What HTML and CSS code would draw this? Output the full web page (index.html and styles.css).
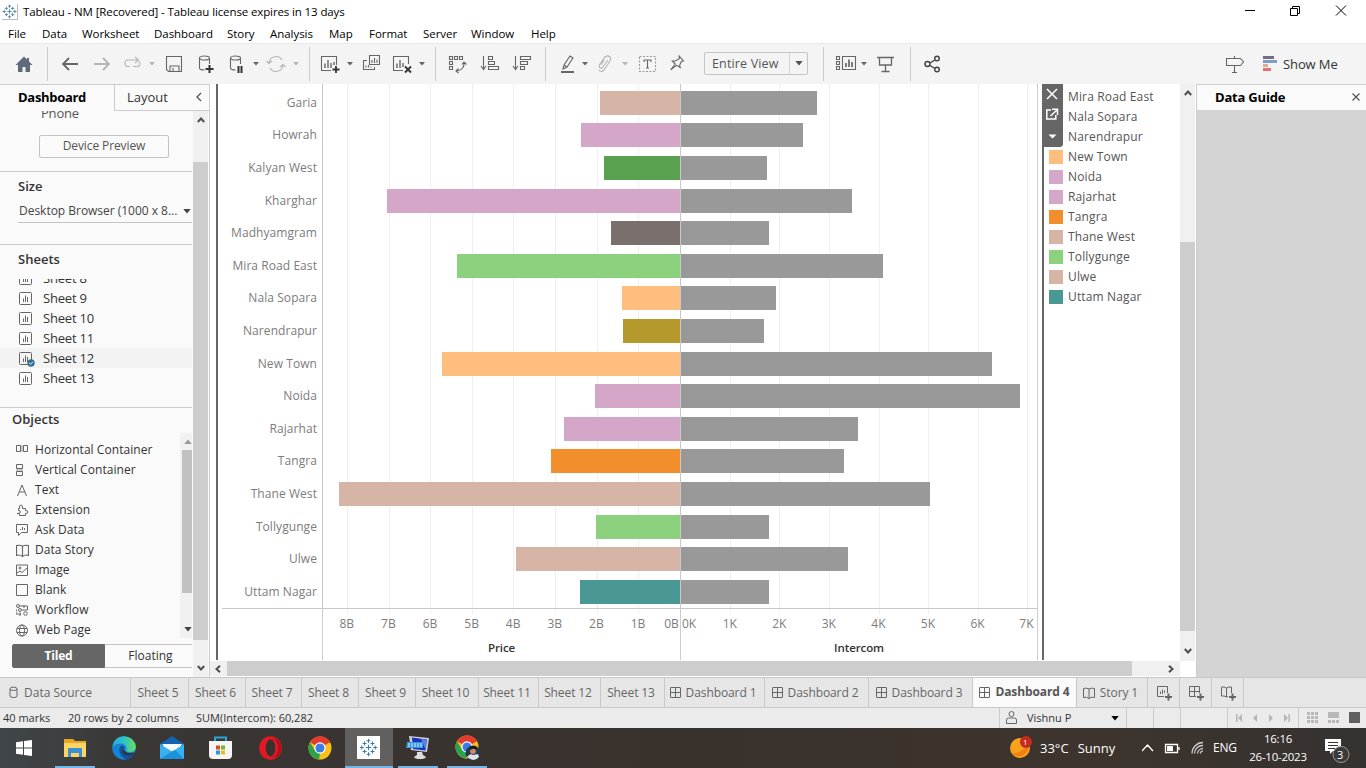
FILE: index.html
```html
<!DOCTYPE html>
<html lang="en">
<head>
<meta charset="utf-8">
<title>Tableau - NM</title>
<link rel="stylesheet" href="styles.css">
</head>
<body>
<svg class="defs" width="0" height="0">
  <symbol id="caret" viewBox="0 0 6 4"><path d="M0 0h6L3 3.6z" fill="currentColor"/></symbol>
  <symbol id="sheet" viewBox="0 0 13 13"><rect x=".5" y=".5" width="12" height="12" rx="1"/><path d="M4.500 10V6.500M6.500 10V3.500M8.500 10V5"/></symbol>
  <symbol id="dash" viewBox="0 0 11 11"><rect x=".5" y=".5" width="10" height="10" rx=".5"/><path d="M5.500 0v11M0 5.500h11"/></symbol>
  <symbol id="book" viewBox="0 0 12 12"><path d="M.5 1.500Q3.500.5 6 2Q8.500.5 11.500 1.500V10.500Q8.500 9.500 6 11.500Q3.500 9.500.5 10.500zM6 2V11.500"/></symbol>
  <symbol id="up" viewBox="0 0 8 6"><path d="M.8 5L4 1.500 7.200 5" fill="none" stroke="#4f4f4f" stroke-width="2"/></symbol>
  <symbol id="chrome" viewBox="0 0 24 24"><circle cx="12" cy="12" r="11.500" fill="#fbc116"/><path d="M12 12L2 6.300A11.500 11.500 0 0 1 22 6.300z" fill="#e33b2e"/><path d="M12 .5A11.500 11.500 0 0 1 22 6.300H12z" fill="#e33b2e"/><path d="M2 6.300L7.300 15 12 17.500 11 23.500A11.500 11.500 0 0 1 2 6.300z" fill="#2ba24c"/><circle cx="12" cy="12" r="5.700" fill="#fff"/><circle cx="12" cy="12" r="4.500" fill="#397de8"/></symbol>
  <symbol id="mark" viewBox="0 0 24 24"><path d="M12 1v5M9.500 3.500h5M12 18v5M9.500 20.500h5M1 12h5M3.500 9.500v5M18 12h5M20.500 9.500v5M7 4.500v5M4.500 7h5M17 4.500v5M14.500 7h5M7 14.500v5M4.500 17h5M17 14.500v5M14.500 17h5M12 8.500v7M8.500 12h7" stroke="#3b7d9c" stroke-width="1.300" fill="none"/></symbol>
</svg>

<header class="titlebar">
  <svg class="app-icon" width="16" height="16" viewBox="0 0 24 24"><use href="#mark"/></svg>
  <span class="title">Tableau - NM [Recovered] - Tableau license expires in 13 days</span>
  <svg class="win-controls" width="102" height="12" viewBox="0 0 102 12" fill="none" stroke="#000"><path d="M0 5.500h10M45.500 3.500h7v7h-7zM47.500 3.500v-2h7v7h-2M91 .5l10 10M101 .5l-10 10"/></svg>
</header>
<nav class="menubar">
  <span>File</span><span>Data</span><span>Worksheet</span><span>Dashboard</span><span>Story</span><span>Analysis</span><span>Map</span><span>Format</span><span>Server</span><span>Window</span><span>Help</span>
</nav>

<div class="toolbar">
  <svg class="i" viewBox="0 0 20 20"><path d="M10 2.500L1.500 11H4v7h4.500v-5h3v5H16v-7h2.500L15 7.500V4h-2v1.500z" fill="#5f6b7a" stroke="none"/></svg>
  <i class="sep"></i>
  <svg class="i heavy" viewBox="0 0 20 20"><path d="M18 10H3M9 4L3 10l6 6"/></svg>
  <svg class="i heavy off" viewBox="0 0 20 20"><path d="M2 10h15M11 4l6 6-6 6"/></svg>
  <svg class="i off" viewBox="0 0 20 20"><path d="M8 12.500H5a3.500 3.500 0 0 1 0-6.500h11M13 3l3.500 3L13 9M17 7.500a3 3 0 0 1-1 5h-5"/></svg>
  <svg class="c off"><use href="#caret"/></svg>
  <svg class="i" viewBox="0 0 20 20"><path d="M2.500 2.500h15v15h-13l-2-2zM6 17v-5h9v5M9 17v-3"/></svg>
  <svg class="i" viewBox="0 0 20 20"><ellipse cx="7.500" cy="4" rx="5" ry="2"/><path d="M2.500 4v10q0 2 5 2M12.500 4v6"/><path d="M12.500 11v8M8.500 15h8" stroke="#333" stroke-width="2"/></svg>
  <svg class="i" viewBox="0 0 20 20"><ellipse cx="6.500" cy="4" rx="5" ry="2"/><path d="M1.500 4v10q0 2 5 2M11.500 4v6"/><path d="M9.500 12v7M12.500 12v7" stroke="#333" stroke-width="2"/></svg>
  <svg class="c"><use href="#caret"/></svg>
  <svg class="i off" viewBox="0 0 20 20"><path d="M3 9a7 7 0 0 1 13-3M17 11a7 7 0 0 1-13 3M.5 7L3 9.500 6 7M14 13l3-2.500 2.500 2.500"/></svg>
  <svg class="c off"><use href="#caret"/></svg>
  <i class="sep"></i>
  <svg class="i" viewBox="0 0 20 20"><path d="M11 16.500H1.500v-14h15V11"/><path d="M5 14V9.500M8 14V6M11 14V9M14 11V8" stroke-width="1.400"/><path d="M16 12v7M12.500 15.500h7" stroke="#333" stroke-width="1.800"/></svg>
  <svg class="c"><use href="#caret"/></svg>
  <svg class="i" viewBox="0 0 20 20"><path d="M7.500 1.500h10v9h-10zM5 6.500H1.500v9h11V13M10 9V6M12.500 9V4M15 9V5.500M4 13.500v-2M6.500 13.500V11M9 13.500v-1"/></svg>
  <svg class="i" viewBox="0 0 20 20"><path d="M11 16.500H1.500v-14h15V10"/><path d="M5 14V9.500M8 14V6M11 13V9" stroke-width="1.400"/><path d="M13 12.500l6 6M19 12.500l-6 6" stroke="#333" stroke-width="1.800"/></svg>
  <svg class="c"><use href="#caret"/></svg>
  <i class="sep"></i>
  <svg class="i" viewBox="0 0 20 20"><path d="M1.500 2.500h3v3h-3zM6.500 2.500h3v3h-3zM11.500 2.500h3v3h-3zM1.500 7.500h3v3h-3zM1.500 12.500h3v3h-3zM16 8q1 8-8 9M14 10.500L16 8l2.500 2.500M10.500 14.500L8 17l2.500 2"/></svg>
  <svg class="i" viewBox="0 0 20 20"><path d="M3.500 2v13M1 12l2.500 3.500L6 12M8.500 2.500h4v3h-4zM8.500 7.500h6v3h-6zM8.500 12.500h10v3h-10z"/></svg>
  <svg class="i" viewBox="0 0 20 20"><path d="M3.500 2v13M1 12l2.500 3.500L6 12M8.500 2.500h10v3h-10zM8.500 7.500h7v3h-7zM8.500 12.500h4v3h-4z"/></svg>
  <i class="sep"></i>
  <svg class="i" viewBox="0 0 20 20"><path d="M4 15l1-4 6-9 3 2-6 9zM5 11l3 2"/><path d="M2 18h13" stroke-width="2"/></svg>
  <svg class="c"><use href="#caret"/></svg>
  <svg class="i off" viewBox="0 0 20 20"><path d="M12 6l-5 7q-2 2-3.300.7T4 10l5-7q2.500-2 4.500-.5T14 7l-6 9q-3 3-5 0M8 6l-3 5"/></svg>
  <svg class="c off"><use href="#caret"/></svg>
  <svg class="i" viewBox="0 0 20 20"><rect x="1.500" y="2.500" width="16" height="15" stroke-dasharray="2 1.500" stroke="#999"/><path d="M6 8V6h7v2M9.500 6v8M8 14h3"/></svg>
  <svg class="i" viewBox="0 0 20 20"><path d="M9 2l5 4-2 1-1 4 1 2-4-1.500L3 17l3.500-6.500L3 8l3-.5 3.500-3z" transform="rotate(10 9 9)"/></svg>
  <div class="fit"><span>Entire View</span><svg width="8" height="5" viewBox="0 0 6 4"><use href="#caret"/></svg></div>
  <i class="sep"></i>
  <svg class="i wide" viewBox="0 0 22 20"><path d="M1.500 2.500h3v3h-3zM1.500 7.500h3v3h-3zM1.500 12.500h3v3h-3zM7.500 2.500h13v13h-13z"/><path d="M11 13V9M14 13V5.500M17 13V8" stroke-width="1.700"/></svg>
  <svg class="c"><use href="#caret"/></svg>
  <svg class="i" viewBox="0 0 20 20"><path d="M0 3.500h17M2.500 3v8h12V3M8.500 11v6M4.500 17.500h8" stroke-width="1.300"/></svg>
  <i class="sep"></i>
  <svg class="i share" viewBox="0 0 20 20"><path d="M7 9l5-3M7 11.500l5 3" /><circle cx="4.500" cy="10" r="2.500"/><circle cx="14" cy="4.500" r="2.300"/><circle cx="14" cy="15.500" r="2.300"/></svg>
  <svg class="i" viewBox="0 0 20 20"><path d="M1.500 4.500h14l3 3.500-3 3.500h-14zM9.500 2v2M9.500 11.500V18M7 18.500h5"/></svg>
  <div class="showme"><svg width="15" height="16"><path d="M0 0h11v3H0z" fill="#7b6888"/><path d="M0 4h14v3H0z" fill="#7ba0c4"/><path d="M0 8h5v3H0z" fill="#e8a98c"/><path d="M0 12h8v3H0z" fill="#e4707d"/></svg>Show Me</div>
</div>

<main class="work">
  <aside class="side">
    <div class="side-tabs"><b>Dashboard</b><div class="layout-tab">Layout<svg width="6" height="10" viewBox="0 0 6 10" fill="none" stroke="#555" stroke-width="1.300"><path d="M5 1L1 5l4 4"/></svg></div></div>
    <div class="side-body">
      <div class="side-content">
        <section class="device"><div class="phone">Phone</div><div class="preview">Device Preview</div></section>
        <section class="size"><h3>Size</h3><div class="size-pick">Desktop Browser (1000 x 8...<svg width="8" height="5" viewBox="0 0 6 4"><use href="#caret"/></svg></div></section>
        <section class="sheets"><h3>Sheets</h3>
          <ul>
            <li><svg class="ln"><use href="#sheet"/></svg>Sheet 8</li>
            <li><svg class="ln"><use href="#sheet"/></svg>Sheet 9</li>
            <li><svg class="ln"><use href="#sheet"/></svg>Sheet 10</li>
            <li><svg class="ln"><use href="#sheet"/></svg>Sheet 11</li>
            <li class="hover"><svg class="ln"><use href="#sheet"/></svg>Sheet 12<svg class="check" viewBox="0 0 8 8"><circle cx="4" cy="4" r="3.700" fill="#31708f"/><path d="M2.200 4l1.300 1.300 2.400-2.500" stroke="#fff" fill="none"/></svg></li>
            <li><svg class="ln"><use href="#sheet"/></svg>Sheet 13</li>
          </ul>
        </section>
        <section class="objects"><h3>Objects</h3>
          <div class="obj-wrap">
          <ul>
            <li><svg class="ln" viewBox="0 0 13 13"><path d="M4.500 2h3v5h-3z" fill="#ccc" stroke="#aaa"/><path d="M.5 1.500h4v6h-4zM7.500 1.500h4v6h-4z"/></svg>Horizontal Container</li>
            <li><svg class="ln" viewBox="0 0 13 13"><path d="M1 4.500h5v3H1z" fill="#ccc" stroke="#aaa"/><path d="M.5.5h6v4h-6zM.5 7.500h6v4h-6z"/></svg>Vertical Container</li>
            <li><svg class="ln" viewBox="0 0 13 13"><path d="M1.500 12L6 1l4.500 11M3.500 8h5.500"/></svg>Text</li>
            <li><svg class="ln" viewBox="0 0 13 13"><path d="M3.500 11.500H9.500V9.500Q12 9.500 12 8T9.500 6.500V4.500H6.500Q7 1 5 1T3.500 4.500H2.500V6.500Q4.500 6.500 4.500 8T1 9.500L3.500 9.500z"/></svg>Extension</li>
            <li><svg class="ln" viewBox="0 0 13 13"><path d="M.5.5h11v8h-6l-3 3v-3h-2zM4.500 6V5M6.500 6V3M8.500 6V4"/></svg>Ask Data</li>
            <li><svg class="ln" viewBox="0 0 12 12"><use href="#book"/></svg>Data Story</li>
            <li><svg class="ln" viewBox="0 0 13 13"><path d="M.5 1h11v10.500H.5zM1 9l3-2 2 1.500L11 4"/><circle cx="4" cy="4" r="1"/></svg>Image</li>
            <li><svg class="ln" viewBox="0 0 13 13"><path d="M.5.5h11v11H.5z"/></svg>Blank</li>
            <li><svg class="ln" viewBox="0 0 13 13"><circle cx="2" cy="2" r="1.500"/><circle cx="4" cy="6" r="1.500"/><circle cx="9.500" cy="9.500" r="1.800"/><path d="M3.500 2h8v4H6M1 6H0v4h5M3.500 8.500L5 10l-1.500 2M8 1v3"/></svg>Workflow</li>
            <li><svg class="ln" viewBox="0 0 13 13"><circle cx="6" cy="6.500" r="5.500"/><ellipse cx="6" cy="6.500" rx="2.500" ry="5.500"/><path d="M1 4.500h10M1 8.500h10"/></svg>Web Page</li>
          </ul>
          <div class="obj-scroll"><svg viewBox="0 0 6 4"><path d="M0 4h6L3 .4z" fill="#999"/></svg><i></i><svg viewBox="0 0 6 4" color="#444"><use href="#caret"/></svg></div>
          </div>
          <div class="mode"><b>Tiled</b><span>Floating</span></div>
        </section>
      </div>
      <div class="vscroll side-scroll"><svg class="arr"><use href="#up"/></svg><i></i><svg class="arr dn"><use href="#up"/></svg></div>
    </div>
  </aside>

  <section class="canvas">
    <div class="view">
      <div class="sheetview">
        <div class="plot">
          <svg class="grid" width="819" height="529" stroke="#efefef" shape-rendering="crispEdges"><path d="M129.500 0v529M171.500 0v529M212.500 0v529M254.500 0v529M295.500 0v529M337.500 0v529M379.500 0v529M420.500 0v529M512.500 0v529M561.500 0v529M611.500 0v529M661.500 0v529M710.500 0v529M760.500 0v529M809.500 0v529"/><path d="M104.500 0v529M462.500 0v529M4 524.500h815" stroke="#c8c8c8"/></svg>
          <div class="row"><span>Garia</span><i class="sand" style="width:80px"></i><i class="g" style="width:136px"></i></div>
          <div class="row"><span>Howrah</span><i class="pink" style="width:99px"></i><i class="g" style="width:122px"></i></div>
          <div class="row"><span>Kalyan West</span><i class="green" style="width:76px"></i><i class="g" style="width:86px"></i></div>
          <div class="row"><span>Kharghar</span><i class="pink" style="width:293px"></i><i class="g" style="width:171px"></i></div>
          <div class="row"><span>Madhyamgram</span><i class="umber" style="width:69px"></i><i class="g" style="width:88px"></i></div>
          <div class="row"><span>Mira Road East</span><i class="lime" style="width:223px"></i><i class="g" style="width:202px"></i></div>
          <div class="row"><span>Nala Sopara</span><i class="peach" style="width:58px"></i><i class="g" style="width:95px"></i></div>
          <div class="row"><span>Narendrapur</span><i class="olive" style="width:57px"></i><i class="g" style="width:83px"></i></div>
          <div class="row"><span>New Town</span><i class="peach" style="width:238px"></i><i class="g" style="width:311px"></i></div>
          <div class="row"><span>Noida</span><i class="pink" style="width:85px"></i><i class="g" style="width:339px"></i></div>
          <div class="row"><span>Rajarhat</span><i class="pink" style="width:116px"></i><i class="g" style="width:177px"></i></div>
          <div class="row"><span>Tangra</span><i class="orange" style="width:129px"></i><i class="g" style="width:163px"></i></div>
          <div class="row"><span>Thane West</span><i class="sand" style="width:341px"></i><i class="g" style="width:249px"></i></div>
          <div class="row"><span>Tollygunge</span><i class="lime" style="width:84px"></i><i class="g" style="width:88px"></i></div>
          <div class="row"><span>Ulwe</span><i class="sand" style="width:164px"></i><i class="g" style="width:167px"></i></div>
          <div class="row"><span>Uttam Nagar</span><i class="teal" style="width:100px"></i><i class="g" style="width:88px"></i></div>
        </div>
        <div class="axes">
          <div class="axis price"><div class="ticks"><span>8B</span><span>7B</span><span>6B</span><span>5B</span><span>4B</span><span>3B</span><span>2B</span><span>1B</span><span>0B</span></div><div class="axis-name">Price</div></div>
          <div class="axis inter"><div class="ticks"><span>0K</span><span>1K</span><span>2K</span><span>3K</span><span>4K</span><span>5K</span><span>6K</span><span>7K</span></div><div class="axis-name">Intercom</div></div>
        </div>
      </div>
      <div class="legend">
        <ul>
          <li><i></i>Mira Road East</li><li><i></i>Nala Sopara</li><li><i></i>Narendrapur</li>
          <li><i class="peach"></i>New Town</li><li><i class="pink"></i>Noida</li><li><i class="pink"></i>Rajarhat</li><li><i class="orange"></i>Tangra</li><li><i class="sand"></i>Thane West</li><li><i class="lime"></i>Tollygunge</li><li><i class="sand"></i>Ulwe</li><li><i class="teal"></i>Uttam Nagar</li>
        </ul>
        <svg class="handle" width="21" height="63" viewBox="0 0 21 63" fill="none" stroke="#fff" stroke-width="1.500"><path d="M0 0h21v61l-2 2H0z" fill="#666" stroke="none"/><path d="M5 5l10 10M15 5L5 15M9 26H4.800v9h9v-4M10 25.300h5.500V31M15.500 25.500L8.500 32"/><path d="M6.500 50.500h8l-4 4z" fill="#fff" stroke="none"/></svg>
      </div>
      <div class="vscroll main-scroll"><svg class="arr"><use href="#up"/></svg><i></i><svg class="arr dn"><use href="#up"/></svg></div>
    </div>
    <div class="hscroll"><svg class="arr lt"><use href="#up"/></svg><i></i><svg class="arr rt"><use href="#up"/></svg></div>
  </section>

  <aside class="guide"><div class="guide-head"><b>Data Guide</b><svg width="8" height="8" stroke="#555" stroke-width="1.200"><path d="M.5.5l7 7M7.500.5l-7 7"/></svg></div></aside>
</main>

<div class="tabs">
  <span class="ds"><svg width="10" height="13" viewBox="0 0 10 13"><path d="M1 3v7q0 1.500 3.500 1.500T8 10V3"/><ellipse cx="4.500" cy="2.800" rx="3.500" ry="1.700"/></svg>Data Source</span>
  <span>Sheet 5</span><span>Sheet 6</span><span>Sheet 7</span><span>Sheet 8</span><span>Sheet 9</span><span>Sheet 10</span><span>Sheet 11</span><span>Sheet 12</span><span>Sheet 13</span>
  <span><svg width="11" height="11"><use href="#dash"/></svg>Dashboard 1</span>
  <span><svg width="11" height="11"><use href="#dash"/></svg>Dashboard 2</span>
  <span><svg width="11" height="11"><use href="#dash"/></svg>Dashboard 3</span>
  <span class="on"><svg width="11" height="11"><use href="#dash"/></svg>Dashboard 4</span>
  <span class="story"><svg width="12" height="12"><use href="#book"/></svg>Story 1</span>
  <span class="add"><svg width="16" height="16" viewBox="0 0 16 16"><path d="M7 10.500H.5V.5h10V7M3.500 8V5.500M5.500 8V3.500M7.500 7V4.500"/><path d="M11.500 7.500v7M8 11h7" stroke-width="2"/></svg></span>
  <span class="add"><svg width="16" height="16" viewBox="0 0 16 16"><path d="M7 10.500H.5V.5h10V7M5.500 0v11M0 5.500h11"/><path d="M11.500 7.500v7M8 11h7" stroke-width="2"/></svg></span>
  <span class="add"><svg width="16" height="16" viewBox="0 0 16 16"><path d="M7 10.500L5.500 11Q3 9.500.5 10V1Q3.500.5 5.500 2 8 .5 10.500 1v6M5.500 2v9"/><path d="M11.500 7.500v7M8 11h7" stroke-width="2"/></svg></span>
  <span></span>
</div>

<div class="status">
  <span>40 marks</span><span>20 rows by 2 columns</span><span>SUM(Intercom): 60,282</span>
  <div class="user"><svg width="11" height="13" viewBox="0 0 11 13" fill="none" stroke="#666"><circle cx="5.500" cy="3" r="2.500"/><path d="M.5 12.500V9q0-2 2-2h6q2 0 2 2v3.500z"/></svg><span>Vishnu P</span><svg class="drop" width="8" height="5" viewBox="0 0 6 4"><use href="#caret"/></svg></div>
  <i></i><i></i><i></i>
  <div class="nav"><svg width="54" height="8" fill="#b5b5b5"><path d="M0 0h1.500v8H0zM6 0v8L2 4zM21 0v8l-4-4zM33 0v8l4-4zM48 0v8l4-4zM52.500 0H54v8h-1.500z"/></svg></div>
  <div class="modes"><svg width="54" height="12" fill="#b8b8b8"><path d="M0 0h3v3H0zM4 0h3v3H4zM8 0h3v3H8zM0 4h3v3H0zM4 4h3v3H4zM8 4h3v3H8zM0 8h3v3H0zM4 8h3v3H4zM8 8h3v3H8zM21 0h11v6H21zM21 8h3v3h-3zM25 8h3v3h-3zM29 8h3v3h-3z"/><path d="M42 0h11v11H42z" fill="#606060"/></svg></div>
</div>

<footer class="taskbar">
  <div class="apps">
    <span><svg width="16" height="16" fill="#fff"><path d="M0 2.300L7 1.300V7.500H0zM8 1.100L16 0v7.500H8zM0 8.500h7v6.300L0 13.800zM8 8.500h8V16l-8-1.100z"/></svg></span>
    <span class="run files"><svg width="22" height="20"><path d="M0 1h9l2 2h11v16H0z" fill="#e9a820"/><path d="M0 5h22v14H0z" fill="#fbd565"/><path d="M4 19v-8q0-1 1-1h12q1 0 1 1v8h-3v-4H7v4z" fill="#3c8fd0"/></svg></span>
    <span><svg width="24" height="24"><defs><linearGradient id="eg" x1="0" x2="1"><stop offset="0" stop-color="#2aa9e0"/><stop offset=".5" stop-color="#2fc2c4"/><stop offset="1" stop-color="#6bdc5a"/></linearGradient></defs><circle cx="12" cy="12" r="11.800" fill="#1583d4"/><path d="M.3 11Q2 .4 12 .2 23 1 23.900 11q-.3 5-6 5-5-.3-3.300-3Q14.500 8 9 7.500 3 7.500.3 11z" fill="url(#eg)"/><path d="M9.500 9Q5 14 9.500 20L14 23.600Q20 22.500 22.500 17.500q-6 2.500-9.500-1T12.500 11z" fill="#12519c"/><path d="M12.500 10q-2 3 .5 5.300 3 3 8.500 1.200 2-.5 1 1.200-6 3-10 .3T12.500 10z" fill="#38332f"/></svg></span>
    <span><svg width="24" height="23"><path d="M0 8L12 0l12 8v14H0z" fill="#1264b0"/><path d="M3 8h18v8H3z" fill="#f4fafd"/><path d="M0 8l12 7.500L24 8v15H0z" fill="#38b2ee"/><path d="M0 23L15 13.500 24 23z" fill="#1c91dc"/><path d="M1.500 8h21L14 14.500z" fill="#f4fafd"/></svg></span>
    <span><svg width="23" height="24"><path d="M6 6V1.500h11V6" fill="none" stroke="#2aa5dc" stroke-width="2"/><path d="M0 5h23v14q0 4-4 4H4q-4 0-4-4z" fill="#f5f5f5"/><path d="M7 9.500h4v4H7z" fill="#e04a23"/><path d="M12 9.500h4v4h-4z" fill="#76b82a"/><path d="M7 14.500h4v4H7z" fill="#1f9bde"/><path d="M12 14.500h4v4h-4z" fill="#f6b71c"/></svg></span>
    <span><svg width="23" height="24"><ellipse cx="11.500" cy="12" rx="11.300" ry="11.800" fill="#e21a25"/><path d="M13 2q9 1 10 10-1 9-10 10 6-3 6-10T13 2z" fill="#b3101c"/><ellipse cx="11.500" cy="12" rx="4.800" ry="8.500" fill="#38322f"/></svg></span>
    <span><svg width="24" height="24"><use href="#chrome"/></svg></span>
    <span class="run active"><svg width="23" height="23"><path d="M0 0h23v23H0z" fill="#fff"/><svg x="2" y="2" width="19" height="19" viewBox="0 0 24 24"><use href="#mark"/></svg></svg></span>
    <span class="run pc"><svg width="24" height="24"><path d="M3 0l20 2-2 14L5 14z" fill="#cbd0d6"/><path d="M6 1.500l15 2-1.500 11L7 13z" fill="#1734bb"/><path d="M15 3l6 .7-1.500 10z" fill="#5980e8"/><path d="M1 6h16v6H0z" fill="#3598dc"/><path d="M2 8h14M2 10h14" stroke="#d8ecff" stroke-dasharray="2 1"/><path d="M11 16h5l1 3 3 2q-1 2-6 2t-6-2l3-2z" fill="#ddd"/></svg></span>
    <span class="run me"><svg width="26" height="26"><svg width="24" height="24"><use href="#chrome"/></svg><circle cx="18" cy="18" r="7.500" fill="#273747"/><circle cx="18" cy="16" r="3" fill="#c38c6d"/><path d="M15 15q0-4 3.500-4t3 4l-3-1.500z" fill="#171717"/><path d="M12 22q3-4 6-2l5-1 1 3q-5 6-12 0z" fill="#dde4ed"/></svg></span>
  </div>
  <div class="weather"><svg width="24" height="22"><circle cx="10" cy="12" r="10" fill="#f7a11d"/><path d="M1.500 17q8 2 17-9a10 10 0 0 1-17 9z" fill="#f17f13"/><circle cx="16" cy="6" r="6" fill="#c42b1c"/></svg><em>1</em><span>33°C</span><span>Sunny</span></div>
  <svg class="tray" width="66" height="16" fill="none" stroke="#fff" stroke-width="1.300"><path d="M0 11l5.500-6 5.500 6M23.500 4.500h12v8h-12zM37 7v3"/><path d="M25 6h6v5h-6z" fill="#fff" stroke="none"/><path d="M50 13.500A11 11 0 0 1 61 2.500M52.500 13.500A8 8 0 0 1 61 5.500M55.500 13.500A5.500 5.500 0 0 1 61 8.500M58.500 13.500a2 2 0 0 1 2.500-2.300" stroke="#ccc"/></svg>
  <span class="lang">ENG</span>
  <div class="clock"><span>16:16</span><span>26-10-2023</span></div>
  <div class="note"><svg width="26" height="26"><path d="M0 1h16v12H8l-3 3v-3H0z" fill="#fff"/><path d="M3 4.500h10M3 7.500h10M3 10.500h7" stroke="#333"/><circle cx="16" cy="16.500" r="8" fill="#3c3a38" stroke="#999"/></svg><em>3</em></div>
</footer>
</body>
</html>
```
FILE: styles.css
```css
* { box-sizing: border-box; }
body { margin: 0; width: 1366px; height: 768px; overflow: hidden; display: flex; flex-direction: column; background: #fff; font: 12px/20px "Open Sans", "Noto Sans", sans-serif; color: #333; }
ul { list-style: none; margin: 0; padding: 0; }
h3 { margin: 0; font-size: 13px; font-weight: 600; color: #333; }
i, em { font-style: normal; display: block; }
svg { display: block; flex: none; }
.defs { position: absolute; }

.titlebar { height: 24px; display: flex; align-items: center; padding-left: 2px; color: #000; }
.app-icon { border-right: 1px solid #bbb; border-bottom: 1px solid #bbb; }
.title { margin-left: 5px; font-size: 11.5px; letter-spacing: -0.12px; }
.win-controls { margin-left: auto; margin-right: 19px; margin-top: -3px; }
.menubar { height: 19px; display: grid; grid-template-columns: 34px 40px 72px 73px 43px 59px 40px 54px 48px 60px 60px; padding-left: 8px; color: #000; font-size: 11.5px; letter-spacing: -0.05px; }

.toolbar { height: 41px; background: #f4f4f4; border-top: 1px solid #e9e9e9; display: grid; align-items: center; padding-left: 14px; grid-template-columns: 33px 13px 32px 30px 27px 15px 33px 32px 24px 13px 27px 16px 11px 27px 15px 30px 27px 16px 13px 32px 32px 33px 14px 23px 14px 26px 16px 31px 35px 119px 12px 26px 16px 33px 13px 302px 37px 1fr; }
.i { width: 20px; height: 20px; fill: none; stroke: #666; stroke-width: 1.1; }
.i.wide { width: 22px; }
.i.share { stroke: #444; stroke-width: 1.4; }
.heavy { stroke-width: 1.8; }
.i.off { stroke: #b5b5b5; }
.c { width: 6px; height: 4px; color: #666; }
.c.off { color: #b5b5b5; }
.sep { width: 1px; height: 34px; background: #ccc; }
.fit { width: 104px; height: 23px; border: 1px solid #c4c4c4; border-radius: 2px; display: flex; align-items: center; color: #555; margin-top: -1px; }
.fit span { width: 85px; padding-left: 7px; line-height: 21px; border-right: 1px solid #d4d4d4; font-size: 12.5px; letter-spacing: 0.15px; }
.fit svg { margin-left: 5px; color: #555; }
.showme { display: flex; align-items: center; font-size: 13px; gap: 5px; padding-left: 1px; letter-spacing: -0.1px; margin-top: -1px; }

.work { height: 593px; display: flex; }
.side { width: 210px; background: #fafafa; border-right: 1px solid #ccc; border-top: 1px solid #ccc; }
.side-tabs { height: 26px; display: flex; justify-content: space-between; font-size: 13px; }
.side-tabs b { padding-left: 18px; line-height: 24px; color: #000; font-weight: 700; letter-spacing: -0.3px; }
.layout-tab { width: 95px; border: solid #ccc; border-width: 0 0 1px 1px; padding: 0 7px 1px 12px; display: flex; align-items: center; justify-content: space-between; }
.side-body { height: 566px; display: flex; }
.side-content { width: 193px; padding-right: 1px; overflow: hidden; }
.device { height: 61px; border-bottom: 1px solid #ccc; overflow: hidden; }
.phone { height: 24px; padding-left: 41px; line-height: 19px; margin-top: -7px; font-size: 13px; color: #555; letter-spacing: -0.2px; }
.preview { width: 130px; height: 23px; margin: 7px 0 0 39px; border: 1px solid #c4c4c4; border-radius: 2px; text-align: center; line-height: 20px; color: #555; letter-spacing: -0.1px; }
.size { height: 73px; border-bottom: 1px solid #ccc; padding: 4px 0 0 18px; }
.size-pick { height: 23px; margin-top: 4px; padding: 0 1px 0 1px; border-bottom: 1px solid #c4c4c4; display: flex; align-items: center; justify-content: space-between; font-size: 12px; letter-spacing: -0.02px; color: #444; white-space: nowrap; }
.sheets { height: 163px; border-bottom: 1px solid #ccc; }
.sheets h3 { padding: 4px 0 0 18px; height: 34px; }
.sheets ul { height: 110px; overflow: hidden; }
.sheets li { height: 20px; padding-left: 19px; display: flex; align-items: center; gap: 11px; font-size: 13px; letter-spacing: -0.2px; position: relative; line-height: 19px; }
.sheets li:first-child { margin-top: -11px; }
.sheets li.hover { background: #f3f3f3; }
.ln { width: 13px; height: 13px; fill: none; stroke: #666; stroke-width: 1; }
.check { position: absolute; left: 27px; top: 11px; width: 8px; height: 8px; }
.objects h3 { padding: 1px 0 0 12px; height: 25px; }
.obj-wrap { display: flex; height: 205px; justify-content: space-between; }
.obj-wrap ul { padding-top: 7px; }
.obj-wrap li { height: 20px; padding-left: 16px; display: flex; align-items: center; gap: 6px; letter-spacing: 0.05px; }
.obj-scroll { width: 12px; background: #f1f1f1; display: flex; flex-direction: column; justify-content: space-between; align-items: flex-end; padding: 6px 0; }
.obj-scroll svg { width: 8px; height: 5px; }
.obj-scroll i { width: 10px; height: 143px; margin: 6px 0 auto; background: #c1c1c1; }
.mode { display: flex; height: 24px; margin: 6px 0 0 12px; line-height: 22px; text-align: center; }
.mode b { width: 93px; background: #666; color: #fff; border: 1px solid #666; border-radius: 2px 0 0 2px; letter-spacing: -0.2px; }
.mode span { flex: 1; border: solid #c4c4c4; border-width: 1px 0; padding-left: 4px; }

.vscroll { flex: none; width: 15px; background: #f0f0f0; display: flex; flex-direction: column; align-items: center; }
.vscroll i { width: 15px; background: #cdcdcd; }
.arr { width: 8px; height: 6px; margin-top: 6px; }
.dn { transform: rotate(180deg); }
.side-scroll i { height: 478px; margin: 39px 0 18px; }
.side-scroll .arr.dn { margin-top: 7px; }

.canvas { width: 986px; background: #fff; }
.view { height: 577px; display: flex; }
.sheetview { flex: none; width: 822px; margin-left: 6px; border-left: 2px solid #666; border-right: 1px solid #ccc; height: 576px; }
.plot { position: relative; height: 525px; padding-top: 2.55px; }
.grid { position: absolute; left: 0; top: 0; }
.row { height: 32.6px; position: relative; display: grid; grid-template-columns: 104px 358px 1px 1fr; align-items: center; }
.row span { text-align: right; padding-right: 5px; color: #7c7c7c; letter-spacing: 0.07px; }
.row i { height: 24px; justify-self: end; }
.row i.g { background: #999; justify-self: start; grid-column: 4; }
.axes { height: 51px; margin-left: 104px; display: flex; color: #7c7c7c; }
.axis { height: 51px; border-left: 1px solid #ccc; padding-top: 5px; }
.price { width: 358px; }
.inter { flex: 1; }
.ticks { display: flex; font-size: 12px; }
.ticks span { flex: none; }
.price .ticks span { width: 41.6px; text-align: center; }
.price .ticks { padding-left: 3px; }
.price .ticks span:last-child { width: 20px; text-align: right; }
.inter .ticks span { width: 49.55px; text-align: center; }
.inter .ticks span:first-child { width: 24px; text-align: left; padding-left: 1px; }
.inter .ticks span:last-child { width: 32px; text-align: left; padding-left: 17px; }
.inter .ticks { width: 354px; }
.axis-name { text-align: center; color: #333; margin-top: 4px; font-weight: 600; font-size: 11.5px; letter-spacing: -0.1px; }

.legend { position: relative; flex: none; width: 138px; margin-left: 4px; border-left: 2px solid #666; padding: 3px 0 0 5px; height: 576px; }
.legend li { height: 20px; display: flex; align-items: center; gap: 5px; color: #555; letter-spacing: 0.15px; }
.legend i { width: 14px; height: 14px; }
.handle { position: absolute; left: -2px; top: 0; }
.main-scroll { height: 577px; }
.main-scroll i { height: 389px; margin: 146px 0 11px; }
.hscroll { width: 970px; height: 15px; background: #f0f0f0; display: flex; align-items: center; padding: 0 5px 0 4px; justify-content: space-between; }
.hscroll i { width: 905px; height: 15px; margin: 0 auto 0 5px; background: #cdcdcd; }
.hscroll .arr { margin: 0; }
.lt { transform: rotate(-90deg); }
.rt { transform: rotate(90deg); }
.sand { background: #d7b5a6; } .pink { background: #d4a6c8; } .green { background: #59a14f; } .umber { background: #79706e; }
.lime { background: #8cd17d; } .peach { background: #ffbe7d; } .olive { background: #b6992d; } .orange { background: #f28e2b; } .teal { background: #499894; }

.guide { flex: 1; background: #d4d4d4; border-top: 1px solid #ccc; border-left: 1px solid #ccc; }
.guide-head { height: 25px; background: #fafafa; display: flex; align-items: center; justify-content: space-between; padding: 0 6px 1px 18px; font-size: 13px; color: #000; letter-spacing: -0.2px; }

.tabs { height: 31px; background: #e6e6e6; border: solid #c8c8c8; border-width: 1px 0; display: grid; grid-template-columns: 131px 58px 57px 56px 57px 57px 63px 60px 62px 64px 100px 104px 104px 104px 71px 32px 32px 32px 1fr; color: #666; letter-spacing: -0.1px; }
.tabs span { border-right: 1px solid #c8c8c8; display: flex; align-items: center; justify-content: center; gap: 5px; padding-right: 3px; }
.tabs span:last-child { border: 0; }
.tabs svg { fill: none; stroke: #666; }
.tabs .ds { justify-content: flex-start; padding-left: 9px; letter-spacing: 0; }
.tabs .on { background: #fafafa; font-weight: 700; color: #555; padding-right: 0; line-height: 18px; padding-bottom: 1px; }
.tabs .add { padding: 2px 0 0 2px; }
.status { height: 20px; background: #ebebeb; display: grid; grid-template-columns: 65px 128px 803px 127px 27px 27px 47px 71px 68px; padding-left: 3px; font-size: 11px; line-height: 20px; }
.status > div, .status > i { border-left: 1px solid #ccc; }
.user { display: flex; align-items: center; padding: 0 7px 0 6px; }
.user svg:first-child { margin-top: -2px; }
.user span { margin: 0 auto 0 10px; font-size: 11px; }
.drop { color: #000; }
.nav, .modes { display: flex; align-items: center; padding: 0 0 1px 8px; }

.taskbar { height: 40px; background: linear-gradient(90deg, #40464a, #393634 10%, #39312c 50%, #3d342d 80%, #353230); display: flex; align-items: center; color: #fff; font-size: 13px; }
.apps { display: grid; grid-template-columns: 48px 54px 43px 54px 43px 56px 43px 54px 46px 54px; height: 40px; width: 1010px; }
.apps span { display: flex; align-items: center; justify-content: center; position: relative; }
.apps span svg { margin-top: -1px; }
.apps .run::after { content: ""; position: absolute; left: 3px; right: 3px; bottom: 0; height: 2px; background: #76b5e8; }
.apps .me::after { left: 6px; right: 8px; }
.apps .files::after { left: 7px; right: 7px; }
.apps .active::after { left: 4px; right: 2px; }
.apps .active { background: linear-gradient(90deg, transparent 4px, #62605f 4px, #62605f 52px, transparent 52px); }
.weather { position: relative; display: flex; align-items: center; width: 132px; }
.weather svg { margin-top: -3px; }
.weather span { margin-left: 6px; }
.weather span + span { margin-left: 9px; }
.weather em { position: absolute; left: 13px; top: -4px; font-size: 8px; line-height: 16px; }
.tray { margin-right: 5px; }
.lang { font-size: 12px; width: 36px; letter-spacing: -0.2px; }
.clock { display: flex; flex-direction: column; align-items: center; font-size: 11.5px; line-height: 18px; width: 60px; white-space: nowrap; letter-spacing: -.25px; margin-left: -1px; }
.note { position: relative; margin-left: 17px; }
.note svg { margin-top: 5px; }
.note em { position: absolute; left: 12px; top: 12px; font-size: 11px; line-height: 20px; }
```
